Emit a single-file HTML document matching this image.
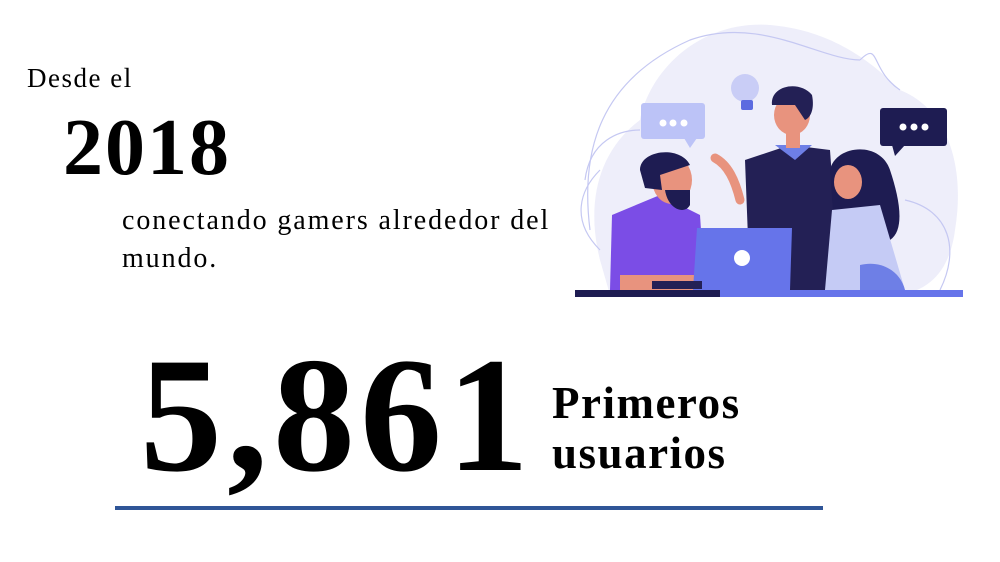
<!DOCTYPE html>
<html><head><meta charset="utf-8"><style>
body{margin:0;width:1000px;height:562px;background:#fff;position:relative;overflow:hidden;font-family:"Liberation Serif",serif;color:#000}
.t{position:absolute;white-space:nowrap}
</style></head><body>
<div class="t" style="left:27px;top:63px;font-size:27px;letter-spacing:1.5px">Desde el</div>
<div class="t" style="left:63px;top:108px;font-size:80px;font-weight:bold;line-height:1;letter-spacing:2px">2018</div>
<div class="t" style="left:122px;top:202px;font-size:28px;line-height:38px;letter-spacing:1.9px">conectando gamers alrededor del<br>mundo.</div>
<div class="t" style="left:140px;top:334px;font-size:164px;font-weight:bold;line-height:1;letter-spacing:5px">5,861</div>
<div class="t" style="left:552px;top:378px;font-size:45px;font-weight:bold;line-height:50px;letter-spacing:1.5px">Primeros<br>usuarios</div>
<div style="position:absolute;left:115px;top:506px;width:708px;height:4px;background:#2f5597"></div>
<svg style="position:absolute;left:0;top:0" width="1000" height="562">
<path d="M600 260 C585 200 600 150 640 120 C650 70 700 20 770 25 C830 30 870 60 900 90 C950 110 965 170 955 230 C950 270 930 290 900 295 L610 295 Z" fill="#eeeefa"/>
<path d="M590 230 C580 150 600 80 690 40 C760 15 820 60 860 60 M860 60 C880 40 870 70 900 90" fill="none" stroke="#c5c8f2" stroke-width="1.2"/>
<path d="M585 180 C590 140 620 130 640 130 M600 250 C570 220 580 190 600 170" fill="none" stroke="#c5c8f2" stroke-width="1.2"/>
<path d="M905 200 C950 210 960 250 940 290" fill="none" stroke="#c5c8f2" stroke-width="1.2"/>
<rect x="641" y="103" width="64" height="36" rx="3" fill="#bcc3f7"/>
<path d="M684 138 L690 148 L697 138Z" fill="#bcc3f7"/>
<circle cx="663" cy="123" r="3.5" fill="#fff"/><circle cx="673" cy="123" r="3.5" fill="#fff"/><circle cx="684" cy="123" r="3.5" fill="#fff"/>
<rect x="880" y="108" width="67" height="38" rx="3" fill="#1e1c52"/>
<path d="M892 145 L895 156 L905 145Z" fill="#1e1c52"/>
<circle cx="903" cy="127" r="3.5" fill="#fff"/><circle cx="914" cy="127" r="3.5" fill="#fff"/><circle cx="925" cy="127" r="3.5" fill="#fff"/>
<circle cx="745" cy="88" r="14" fill="#c9cdf6"/>
<rect x="741" y="100" width="12" height="10" rx="2" fill="#5c6be0"/>
<path d="M745 160 L790 145 L830 150 L840 290 L750 290 Z" fill="#232055"/>
<path d="M775 145 L795 160 L812 145Z" fill="#6e7fe6"/>
<path d="M740 200 C735 180 728 165 715 158" stroke="#e8937e" stroke-width="9" fill="none" stroke-linecap="round"/>
<rect x="786" y="122" width="14" height="26" fill="#e8937e"/>
<ellipse cx="792" cy="115" rx="18" ry="20" fill="#e8937e"/>
<path d="M772 105 C770 85 800 80 812 95 C815 110 810 118 805 120 L795 105 Z" fill="#232055"/>
<path d="M830 170 C835 145 880 140 890 170 C900 200 905 230 890 240 L835 240 Z" fill="#1e1c52"/>
<ellipse cx="848" cy="182" rx="14" ry="17" fill="#e8937e"/>
<path d="M832 210 L880 205 L905 290 L825 290 Z" fill="#c5cbf5"/>
<path d="M860 265 C880 260 900 270 905 290 L860 290Z" fill="#6e7fe6"/>
<path d="M612 215 L660 195 L700 215 L705 290 L610 290 Z" fill="#7b4de6"/>
<ellipse cx="672" cy="180" rx="20" ry="24" fill="#e8937e"/>
<path d="M640 170 C640 150 680 145 690 165 L660 175 L662 190 L645 188Z" fill="#1e1c52"/>
<path d="M665 190 C668 210 685 215 690 205 L690 190 Z" fill="#1e1c52"/>
<path d="M620 275 L700 275 L700 290 L620 290Z" fill="#e8937e"/>
<path d="M697 228 L792 228 L790 290 L693 290Z" fill="#6674ea"/>
<circle cx="742" cy="258" r="8" fill="#fff"/>
<rect x="652" y="281" width="50" height="8" fill="#232055"/>
<rect x="575" y="290" width="388" height="7" fill="#6674ea"/>
<rect x="575" y="290" width="145" height="7" fill="#1e1c52"/>
</svg>
</body></html>
